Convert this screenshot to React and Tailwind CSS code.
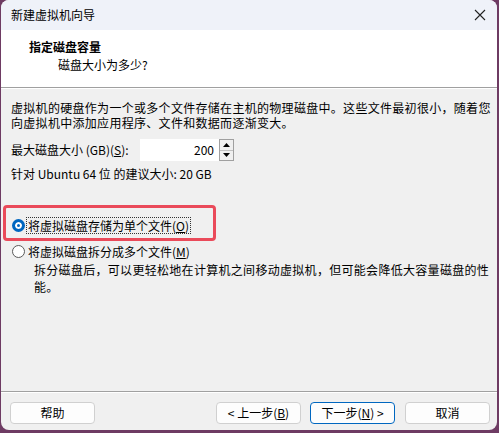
import React from "react";

const F = { fontFamily: '"Noto Sans CJK SC", "Noto Sans", sans-serif' };

function Radio({ checked }) {
  return (
    <span
      className={
        "inline-block w-[13px] h-[13px] rounded-full shrink-0 " +
        (checked
          ? "bg-[#0067c0] border-[3.5px] border-[#0067c0] shadow-[inset_0_0_0_2px_#fff]"
          : "bg-white border border-[#5a5a5a]")
      }
    />
  );
}

function Btn({ children, primary, className = "" }) {
  return (
    <div
      className={
        "h-[22px] w-[85px] flex items-center justify-center rounded-[4px] text-[12px] text-black bg-[#fdfdfd] " +
        (primary ? "border border-[#0067c0]" : "border border-[#d0d0d0]") +
        " " +
        className
      }
    >
      {children}
    </div>
  );
}

export default function App() {
  return (
    <div className="w-[499px] h-[433px] bg-[#6e3b63] overflow-hidden" style={F}>
      <div className="ml-[1px] w-[496px] h-[430px] rounded-t-[8px] rounded-b-[8px] overflow-hidden flex flex-col bg-[#f0f0f0] text-black">
        {/* title bar */}
        <div className="h-[30px] shrink-0 bg-[#eff2f9] flex items-center justify-between pl-[10px] pr-[10px]">
          <span className="text-[12px] leading-none">新建虚拟机向导</span>
          <svg width="12" height="12" viewBox="0 0 12 12" className="mr-[1px]">
            <path d="M1 1 L11 11 M11 1 L1 11" stroke="#222" strokeWidth="1.1" />
          </svg>
        </div>
        {/* header */}
        <div className="h-[57px] shrink-0 bg-white pl-[28px] pt-[8px]">
          <div className="text-[12px] font-bold leading-[17px]">指定磁盘容量</div>
          <div className="text-[12px] leading-[17px] pl-[29px] mt-[1px]">磁盘大小为多少?</div>
        </div>
        <div className="h-px bg-[#a0a0a0] shrink-0" />
        <div className="h-px bg-white shrink-0" />
        {/* body */}
        <div className="flex-1 flex flex-col pt-[11px] text-[12px]">
          <p className="pl-[10px] leading-[15px] tracking-[0.3px] whitespace-nowrap">
            虚拟机的硬盘作为一个或多个文件存储在主机的物理磁盘中。这些文件最初很小，随着您
            <br />
            向虚拟机中添加应用程序、文件和数据而逐渐变大。
          </p>
          <div className="flex items-center pl-[10px] mt-[9px] h-[22px]">
            <span className="w-[129px]">
              最大磁盘大小 (GB)(<span className="underline">S</span>):
            </span>
            <div className="w-[79px] h-[22px] bg-white flex items-center justify-end pr-[5px]">200</div>
            <div className="w-[15px] h-[22px] flex flex-col border border-[#a0a0a0] bg-[#f0f0f0]">
              <div className="flex-1 flex items-center justify-center border-b border-[#c0c0c0]">
                <svg width="7" height="4" viewBox="0 0 7 4"><path d="M0 4 L3.5 0 L7 4Z" fill="#000" /></svg>
              </div>
              <div className="flex-1 flex items-center justify-center">
                <svg width="7" height="4" viewBox="0 0 7 4"><path d="M0 0 L3.5 4 L7 0Z" fill="#000" /></svg>
              </div>
            </div>
          </div>
          <div className="pl-[10px] mt-[5px] leading-[15px]">针对 Ubuntu 64 位 的建议大小: 20 GB</div>

          {/* red highlight with radio */}
          <div className="relative mt-[24px] ml-[2px] w-[213px] h-[36px] border-[3px] border-[#ea4a5a] rounded-[4px] flex items-center pl-[6px] pt-[5px]">
            <Radio checked />
            <span className="ml-[2px] leading-[15px] outline-1 outline-dotted outline-[#333] px-[1px]">
              将虚拟磁盘存储为单个文件(<span className="underline">O</span>)
            </span>
          </div>
          <div className="flex items-center pl-[11px] mt-[3px] h-[15px]">
            <Radio />
            <span className="ml-[3px] leading-[15px]">
              将虚拟磁盘拆分成多个文件(<span className="underline">M</span>)
            </span>
          </div>
          <p className="pl-[33px] mt-[2px] leading-[17px] tracking-[0.3px] whitespace-nowrap">
            拆分磁盘后，可以更轻松地在计算机之间移动虚拟机，但可能会降低大容量磁盘的性
            <br />
            能。
          </p>
          <div className="flex-1" />
          <div className="h-px bg-[#a0a0a0]" />
          <div className="h-px bg-white" />
          <div className="h-[37px] flex items-start pt-[9px] pl-[9px]">
            <Btn>帮助</Btn>
            <div className="flex-1" />
            <Btn>
              &lt; 上一步(<span className="underline">B</span>)
            </Btn>
            <Btn primary className="ml-[9px]">
              下一步(<span className="underline">N</span>) &gt;
            </Btn>
            <Btn className="ml-[10px] mr-[7px]">取消</Btn>
          </div>
        </div>
      </div>
    </div>
  );
}
